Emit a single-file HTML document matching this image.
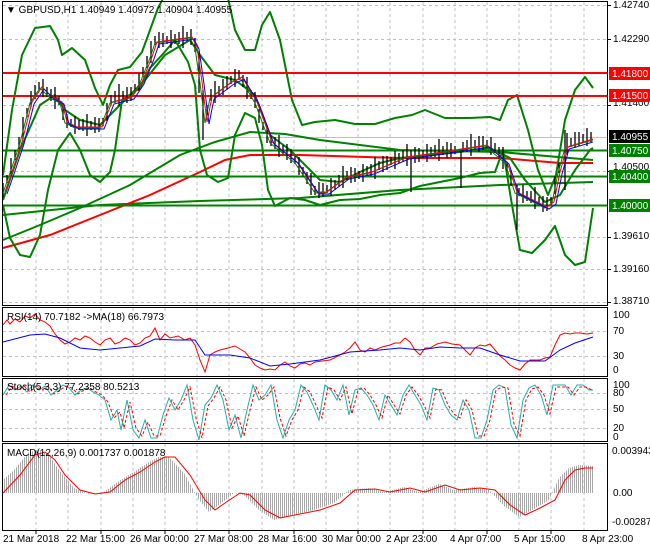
<!DOCTYPE html>
<html><head><meta charset="utf-8"><style>
html,body{margin:0;padding:0;background:#fff;}
svg{display:block;font-family:"Liberation Sans","DejaVu Sans",sans-serif;font-size:10px;}
</style></head><body>
<svg width="650" height="550" viewBox="0 0 650 550" xmlns="http://www.w3.org/2000/svg">
<defs>
<pattern id="vl" width="2" height="4" patternUnits="userSpaceOnUse"><rect x="0" y="0" width="1" height="4" fill="#a8a8a8"/></pattern>
</defs>
<rect width="650" height="550" fill="#fff"/>
<g stroke="#c0c0c0" stroke-dasharray="3,3" fill="none">
<path d="M36 2V305M68 2V305M101 2V305M133 2V305M165 2V305M197 2V305M229 2V305M262 2V305M294 2V305M326 2V305M358 2V305M390 2V305M423 2V305M455 2V305M487 2V305M519 2V305M551 2V305M584 2V305"/>
<path d="M36 308V376M68 308V376M101 308V376M133 308V376M165 308V376M197 308V376M229 308V376M262 308V376M294 308V376M326 308V376M358 308V376M390 308V376M423 308V376M455 308V376M487 308V376M519 308V376M551 308V376M584 308V376"/>
<path d="M36 379V441M68 379V441M101 379V441M133 379V441M165 379V441M197 379V441M229 379V441M262 379V441M294 379V441M326 379V441M358 379V441M390 379V441M423 379V441M455 379V441M487 379V441M519 379V441M551 379V441M584 379V441"/>
<path d="M36 444V530M68 444V530M101 444V530M133 444V530M165 444V530M197 444V530M229 444V530M262 444V530M294 444V530M326 444V530M358 444V530M390 444V530M423 444V530M455 444V530M487 444V530M519 444V530M551 444V530M584 444V530"/>
<path d="M3 5.5H607M3 39.5H607M3 72.5H607M3 105.5H607M3 171.5H607M3 237.5H607M3 269.5H607M3 302.5H607M3 331.5H607M3 356.5H607M3 393.5H607M3 409.5H607M3 428.5H607"/>
</g>
<line x1="3" y1="137.5" x2="607" y2="137.5" stroke="#c0c0c0"/>

<!-- long MAs -->
<polyline fill="none" stroke="#008000" stroke-width="2" points="3,215 100,205 200,201 300,198 400,190 500,185 593,182"/>
<polyline fill="none" stroke="#008000" stroke-width="2" points="3,240 40,225 80,208 130,185 180,155 215,142 250,132 285,134 320,140 400,150 500,152 593,160"/>
<polyline fill="none" stroke="#ff0000" stroke-width="2" points="3,248 50,235 100,215 150,195 200,172 225,160 250,155 300,155 400,158 500,158 560,163 593,163"/>
<!-- bands -->
<polyline fill="none" stroke="#008000" stroke-width="2" stroke-linejoin="round" points="3,175 12,110 22,55 35,28 50,26 58,40 62,55 72,48 85,60 95,88 103,105 110,85 118,70 130,67 142,52 150,30 158,8 165,-5 220,-5 228,-2 235,30 245,50 255,50 262,25 270,12 280,40 292,100 302,125 315,122 335,120 355,124 375,124 395,118 412,115 425,110 445,118 470,118 490,117 500,120 508,100 517,95 528,130 538,170 548,195 556,175 565,120 575,90 585,77 593,88"/>
<polyline fill="none" stroke="#008000" stroke-width="2" stroke-linejoin="round" points="3,205 10,238 20,255 30,257 40,235 48,190 58,150 70,133 80,150 90,175 100,182 110,172 115,150 122,100 140,88 150,68 162,55 175,40 188,62 195,85 200,150 207,175 218,182 228,178 235,135 245,113 255,118 262,145 268,190 275,206 290,198 305,200 320,205 340,200 360,199 380,195 400,193 420,186 440,182 460,178 480,173 495,172 503,150 512,205 520,250 532,253 545,240 555,226 565,255 575,265 585,262 593,208"/>
<polyline fill="none" stroke="#008000" stroke-width="2" stroke-linejoin="round" points="3,200 20,150 40,105 55,95 65,110 80,120 100,125 110,115 125,100 145,80 165,55 190,40 200,55 215,75 235,80 255,95 270,135 290,150 320,180 340,182 360,172 380,163 400,158 430,155 460,152 490,148 510,158 525,180 545,202 560,195 575,170 590,150 593,148"/>
<!-- levels -->
<g stroke-width="2">
<line x1="3" y1="73" x2="607" y2="73" stroke="#ff0000"/>
<line x1="3" y1="96" x2="607" y2="96" stroke="#ff0000"/>
<line x1="3" y1="150.5" x2="607" y2="150.5" stroke="#008000"/>
<line x1="3" y1="176.5" x2="607" y2="176.5" stroke="#008000"/>
<line x1="3" y1="205.5" x2="607" y2="205.5" stroke="#008000"/>
</g>
<!-- price bars -->
<path fill="none" stroke="#000" stroke-width="1.3" d="M3 183v14M7 175v8M11 158v18M15 150v10M19 137v12M23 117v22M27 108v9M31 91v16M35 85v14M39 82v8M43 79v18M47 87v10M51 89v12M55 87v22M59 96v9M63 104v16M67 114v14M71 119v8M75 116v18M79 120v10M83 119v12M87 114v22M91 121v9M95 117v16M99 118v14M103 118v8M107 103v18M111 95v10M115 91v12M119 84v22M123 91v9M127 87v16M131 87v14M135 84v8M139 73v18M143 67v10M147 56v12M151 41v22M155 36v9M159 32v16M163 33v14M167 36v8M171 30v18M175 34v10M179 32v12M183 26v22M187 32v9M191 29v16M195 38v14M199 53v40M203 90v50M207 105v10M211 89v12M215 81v22M219 86v9M223 79v16M227 76v14M231 76v8M235 69v18M239 70v10M243 75v12M247 77v22M251 90v9M255 92v16M259 109v14M263 122v8M267 125v18M271 136v10M275 137v12M279 135v22M283 145v9M287 144v16M291 149v14M295 156v8M299 157v18M303 167v10M307 172v12M311 173v22M315 186v9M319 182v16M323 183v14M327 185v8M331 178v18M335 180v10M339 175v12M343 166v22M347 171v9M351 167v16M355 168v14M359 171v8M363 164v18M367 166v10M371 164v12M375 157v22M379 161v9M383 156v16M387 156v14M391 157v8M395 151v18M399 153v10M403 150v12M407 144v22M411 150v42M415 147v16M419 148v14M423 150v8M427 144v18M431 147v10M435 145v12M439 139v22M443 146v9M447 142v16M451 143v14M455 146v8M461 150v38M463 142v10M467 140v12M471 134v22M475 140v9M479 136v16M483 136v14M487 140v8M491 137v18M495 143v10M499 147v12M503 147v22M507 162v9M511 170v16M517 185v45M519 188v8M523 185v18M527 191v10M531 191v12M535 187v22M539 197v9M543 196v16M547 197v14M551 197v8M555 176v18M559 163v10M565 130v60M567 133v22M571 138v9M575 132v16M579 132v14M583 134v8M587 128v18M591 132v10"/>
<!-- price MAs -->
<polyline fill="none" stroke="#008000" stroke-width="1" points="3,193 10,173 20,143 30,103 40,88 50,98 60,103 65,123 75,128 100,128 110,103 130,98 140,83 150,58 155,43 190,38 195,48 200,83 205,123 210,98 230,83 240,78 255,103 270,143 295,163 315,193 325,193 345,178 370,173 405,158 440,153 485,146 505,163 515,193 545,208 552,203 558,173 565,148 593,140"/>
<polyline fill="none" stroke="#ff0000" stroke-width="1" points="5,192 12,172 22,142 32,102 42,87 52,97 62,102 67,122 77,127 102,127 112,102 132,97 142,82 152,57 157,42 192,37 197,47 202,82 207,122 212,97 232,82 242,77 257,102 272,142 297,162 317,192 327,192 347,177 372,172 407,157 442,152 487,145 507,162 517,192 547,207 554,202 560,172 567,147 593,139"/>
<polyline fill="none" stroke="#0000ff" stroke-width="1" points="7,194 14,174 24,144 34,104 44,89 54,99 64,104 69,124 79,129 104,129 114,104 134,99 144,84 154,59 159,44 194,39 199,49 204,84 209,124 214,99 234,84 244,79 259,104 274,144 299,164 319,194 329,194 349,179 374,174 409,159 444,154 489,147 509,164 519,194 549,209 556,204 562,174 569,149 593,142"/>

<!-- RSI -->
<polyline fill="none" stroke="#ff0000" stroke-width="1" points="3,325 7,320 10,324 15,319 20,322 25,316 30,318 35,314 40,320 45,322 50,326 55,334 60,340 65,344 70,342 75,338 80,340 85,336 90,338 95,342 100,345 105,340 110,338 115,344 120,342 125,338 130,340 135,345 140,343 145,338 150,336 155,328 160,340 165,334 170,338 178,336 185,340 190,338 195,345 200,360 205,372 210,355 215,352 220,350 228,348 235,346 240,349 245,352 250,358 255,365 260,368 265,370 270,369 275,370 280,365 285,362 290,366 295,368 300,364 305,363 310,365 315,362 322,361 330,360 338,356 345,352 350,348 355,342 360,350 365,352 370,348 375,350 382,347 390,345 395,343 400,343 405,338 410,342 415,350 420,355 425,348 430,348 437,344 445,342 452,344 460,345 465,350 470,355 475,348 480,345 485,346 490,344 495,350 500,356 505,360 510,365 515,368 520,370 525,364 530,360 535,360 540,360 545,358 550,357 555,345 560,335 565,333 570,334 575,333 580,333 587,334 593,333"/>
<polyline fill="none" stroke="#0000ff" stroke-width="1" points="3,342 30,335 45,334 60,338 80,348 100,350 120,348 140,346 155,339 175,340 195,340 205,355 230,355 250,358 270,366 290,364 320,360 350,352 380,350 400,348 420,350 440,347 460,348 480,348 500,355 520,361 545,361 560,350 575,343 593,337"/>

<!-- Stoch -->
<polyline fill="none" stroke="#20b2aa" stroke-width="1" points="3,395 9,385 15,390 21,386 27,392 33,385 39,390 45,386 51,395 57,390 63,385 69,388 75,395 81,390 87,388 93,392 99,395 105,400 111,420 117,410 121,430 127,400 133,430 139,438 145,420 151,438 157,438 163,415 169,398 175,410 181,400 187,385 193,420 199,440 205,405 211,398 217,385 223,400 229,430 235,415 241,438 247,410 253,385 259,400 265,395 271,385 277,420 283,438 289,420 295,410 301,385 307,392 313,405 319,420 325,385 331,390 337,400 343,385 349,415 355,390 361,388 367,395 373,405 379,420 385,395 391,405 397,415 403,395 409,385 415,395 421,405 427,420 433,388 439,390 445,405 451,415 457,420 463,400 469,410 475,438 481,438 487,420 493,390 499,385 505,388 511,425 517,438 523,400 529,388 535,385 541,395 547,415 553,385 559,385 565,385 571,395 577,385 583,385 589,390 593,390"/>
<polyline fill="none" stroke="#ff0000" stroke-width="1" stroke-dasharray="3,2" points="6,395 12,386 18,390 24,386 30,392 36,386 42,390 48,386 54,394 60,390 66,386 72,388 78,394 84,390 90,388 96,392 102,395 108,402 114,418 120,412 124,428 130,402 136,428 142,436 148,422 154,436 160,436 166,416 172,400 178,410 184,400 190,387 196,418 202,438 208,406 214,398 220,387 226,400 232,428 238,416 244,436 250,410 256,387 262,400 268,395 274,387 280,418 286,436 292,420 298,410 304,387 310,392 316,405 322,418 328,387 334,390 340,400 346,387 352,414 358,390 364,388 370,395 376,405 382,418 388,395 394,405 400,414 406,395 412,387 418,395 424,405 430,418 436,389 442,390 448,405 454,414 460,418 466,400 472,410 478,436 484,436 490,420 496,390 502,387 508,388 514,424 520,436 526,400 532,389 538,387 544,395 550,414 556,387 562,387 568,387 574,395 580,387 586,387 592,390"/>

<!-- MACD -->
<polygon fill="url(#vl)" points="3,493 3,480 14,470 29,452 39,450 49,455 59,470 74,488 89,494 104,492 119,481 134,472 149,462 159,457 169,457 184,473 199,500 209,512 219,505 234,493 244,495 259,510 274,520 289,516 314,510 334,503 349,490 369,488 384,492 404,487 419,492 439,484 454,490 474,487 489,490 504,506 519,517 534,509 549,500 559,478 569,468 579,465 593,466 593,493"/>
<polyline fill="none" stroke="#ff0000" stroke-width="1" points="3,493 20,475 35,455 45,452 55,460 65,475 80,490 95,494 110,492 125,480 140,472 155,462 165,457 175,457 190,475 205,500 215,510 225,503 240,493 250,495 265,510 280,518 295,515 320,510 340,503 355,490 375,489 390,492 410,488 425,492 445,485 460,490 480,488 495,490 510,505 525,515 540,508 555,500 565,480 575,470 585,468 593,468"/>

<!-- panel borders -->
<g fill="none" stroke="#000" stroke-width="1">
<rect x="2.5" y="1.5" width="605" height="304"/>
<rect x="2.5" y="307.5" width="605" height="69"/>
<rect x="2.5" y="378.5" width="605" height="63"/>
<rect x="2.5" y="443.5" width="605" height="87"/>
</g>
<path stroke="#000" d="M36 530v4M101 530v4M165 530v4M229 530v4M294 530v4M358 530v4M423 530v4M487 530v4M551 530v4M607 5.5h4M607 39.5h4M607 105.5h4M607 171.5h4M607 237.5h4M607 269.5h4M607 302.5h4"/>
<g fill="#000">
<text x="6" y="13">&#9660; GBPUSD,H1  1.40949 1.40972 1.40904 1.40955</text>
<text x="7" y="320">RSI(14) 70.7182  -&gt;MA(18) 66.7973</text>
<text x="7" y="390">Stoch(5,3,3) 77.2358 80.5213</text>
<text x="7" y="456">MACD(12,26,9) 0.001737 0.001878</text>
<text x="613" y="8">1.42740</text>
<text x="613" y="42">1.42290</text>
<text x="613" y="106">1.41400</text>
<text x="613" y="170">1.40500</text>
<text x="613" y="239">1.39610</text>
<text x="613" y="272">1.39160</text>
<text x="613" y="304">1.38710</text>
<text x="613" y="318">100</text>
<text x="613" y="334">70</text>
<text x="613" y="359">30</text>
<text x="613" y="373">0</text>
<text x="613" y="388">100</text>
<text x="613" y="396">80</text>
<text x="613" y="412">50</text>
<text x="613" y="431">20</text>
<text x="613" y="440">0</text>
<text x="612" y="454">0.003943</text>
<text x="613" y="496">0.00</text>
<text x="612" y="525">-0.002875</text>
<text x="3" y="542">21 Mar 2018</text>
<text x="66" y="542">22 Mar 15:00</text>
<text x="130" y="542">26 Mar 00:00</text>
<text x="194" y="542">27 Mar 08:00</text>
<text x="258" y="542">28 Mar 16:00</text>
<text x="322" y="542">30 Mar 00:00</text>
<text x="386" y="542">2 Apr 23:00</text>
<text x="450" y="542">4 Apr 07:00</text>
<text x="514" y="542">5 Apr 15:00</text>
<text x="582" y="542">8 Apr 23:00</text>
</g>
<g>
<rect x="609" y="67" width="41" height="13" fill="#ff0000"/><text x="612" y="77" fill="#fff">1.41800</text>
<rect x="609" y="89" width="41" height="13" fill="#ff0000"/><text x="612" y="99" fill="#fff">1.41500</text>
<rect x="609" y="130" width="41" height="13" fill="#000"/><text x="612" y="140" fill="#fff">1.40955</text>
<rect x="609" y="144" width="41" height="13" fill="#008000"/><text x="612" y="154" fill="#fff">1.40750</text>
<rect x="609" y="170" width="41" height="13" fill="#008000"/><text x="612" y="180" fill="#fff">1.40400</text>
<rect x="609" y="199" width="41" height="13" fill="#008000"/><text x="612" y="209" fill="#fff">1.40000</text>
</g>
</svg>
</body></html>
